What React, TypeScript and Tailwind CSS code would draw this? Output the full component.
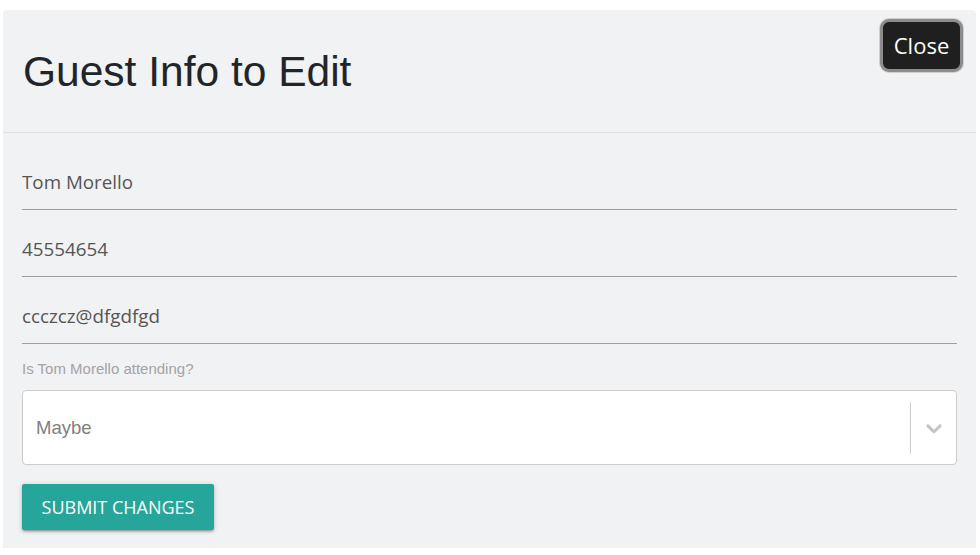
import React, { useState } from 'react';

const fieldFont = "font-['Open_Sans','Noto_Sans',sans-serif]";
const arial = "font-['Liberation_Sans',Arial,sans-serif]";

export default function App() {
  const [name, setName] = useState('Tom Morello');
  const [phone, setPhone] = useState('45554654');
  const [email, setEmail] = useState('ccczcz@dfgdfgd');

  const fields = [
    { value: name, set: setName },
    { value: phone, set: setPhone },
    { value: email, set: setEmail },
  ];

  return (
    <div className="min-h-screen bg-white pt-[10px] pl-[3px]">
      <div className="w-[973px] h-[538px] bg-[#f1f2f4] rounded-t-[4px] flex flex-col">
        {/* header */}
        <div className="h-[123px] border-b border-[#dfe1e6] flex justify-between items-start pl-[20px] pr-[13px]">
          <h1 className={`${arial} self-center text-[42.5px] leading-none text-[#212529] pt-[3px]`}>
            Guest Info to Edit
          </h1>
          <button
            className={`${fieldFont} mt-[9px] h-[53px] w-[83px] rounded-[9px] bg-[#1f1f1f] text-white text-[22px] border-[3px] border-[#8c8c8c] shadow-[0_0_0_1px_#cfcfcf]`}
          >
            Close
          </button>
        </div>

        {/* form */}
        <div className="flex flex-col px-[19px] pt-[29px]">
          {fields.map((f, idx) => (
            <input
              key={idx}
              value={f.value}
              onChange={e => f.set(e.target.value)}
              className={`${fieldFont} h-[48px] ${idx > 0 ? 'mt-[19px]' : ''} pb-[7px] bg-transparent border-b border-[#9e9e9e] text-[18.8px] text-[#555] outline-none`}
            />
          ))}

          <label className={`${arial} mt-[17px] text-[15px] leading-[16px] text-[#a3a3a3]`}>
            Is Tom Morello attending?
          </label>

          <div className="mt-[13px] h-[75px] bg-white border border-[#cccccc] rounded-[4px] flex items-center">
            <span className={`${arial} flex-1 pl-[13px] text-[18.5px] text-[#808080]`}>Maybe</span>
            <span className="w-px h-[52px] bg-[#cccccc]"></span>
            <span className="w-[45px] flex justify-center">
              <svg width="26" height="26" viewBox="0 0 20 20" fill="#c4c4c4">
                <path d="M4.516 7.548c0.436-0.446 1.043-0.481 1.576 0l3.908 3.747 3.908-3.747c0.533-0.481 1.141-0.446 1.574 0 0.436 0.445 0.408 1.197 0 1.615-0.406 0.418-4.695 4.502-4.695 4.502-0.217 0.223-0.502 0.335-0.787 0.335s-0.57-0.112-0.789-0.335c0 0-4.287-4.084-4.695-4.502s-0.436-1.17 0-1.615z" />
              </svg>
            </span>
          </div>

          <div className="mt-[19px]">
            <button
              className={`${fieldFont} h-[46px] w-[192px] rounded-[2px] bg-[#26a69a] text-white text-[18px] shadow-[0_2px_2px_0_rgba(0,0,0,0.14),0_3px_1px_-2px_rgba(0,0,0,0.12),0_1px_5px_0_rgba(0,0,0,0.2)]`}
            >
              SUBMIT CHANGES
            </button>
          </div>
        </div>
      </div>
    </div>
  );
}
